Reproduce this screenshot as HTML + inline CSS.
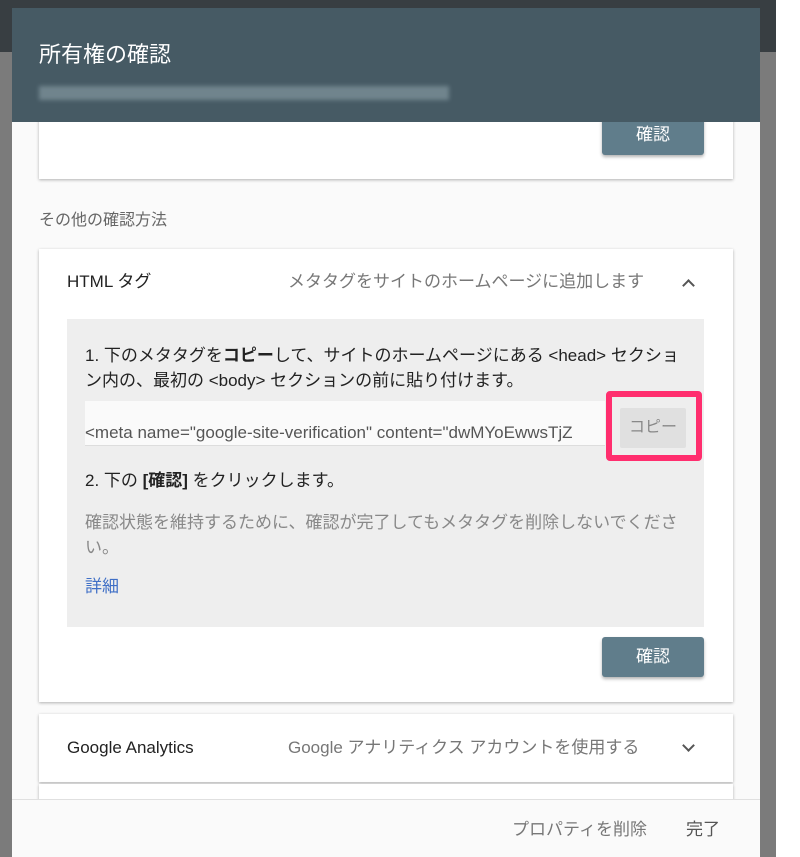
<!DOCTYPE html>
<html><head><meta charset="utf-8"><style>
*{box-sizing:border-box;margin:0;padding:0}
body{width:800px;height:857px;overflow:hidden;background:#7b7b7b;font-family:"Liberation Sans","Noto Sans CJK JP",sans-serif;position:relative}
.topbar{position:absolute;left:0;top:0;width:776px;height:52px;background:#383e42}
.rwhite{position:absolute;left:776px;top:0;width:24px;height:857px;background:#fff}
.dlg{position:absolute;left:12px;top:8px;width:748px;height:849px;background:#fafafa;overflow:hidden}
.hdr{position:absolute;left:0;top:0;width:748px;height:114px;background:#465a64;z-index:3}
.hdr h1{position:absolute;left:27px;top:29px;font-size:22px;font-weight:normal;color:#fff}
.blur{position:absolute;left:27px;top:78px;width:410px;height:14px;background:#7b8f98;opacity:.8;filter:blur(2px)}
.card{position:absolute;left:27px;width:694px;background:#fff;box-shadow:0 1px 3px rgba(0,0,0,.3)}
.btn{position:absolute;width:102px;height:40px;background:#607d8b;color:#fff;font-size:17px;text-align:center;line-height:40px;border-radius:3px;box-shadow:0 2px 3px rgba(0,0,0,.3)}
.lbl{position:absolute;left:27px;top:198px;font-size:16px;color:#666}
.row{position:absolute;font-size:17px;line-height:24px;white-space:nowrap}
.chev{position:absolute;width:9px;height:9px;border-left:2px solid #555;border-top:2px solid #555}
.gray{position:absolute;left:28px;top:70px;width:637px;height:308px;background:#eeeeee}
.t{position:absolute;left:18px;font-size:17px;color:#222;line-height:25px}
.foot{position:absolute;left:0;top:791px;width:748px;height:58px;background:#fafafa;border-top:1px solid #e0e0e0;z-index:3}
</style></head><body>
<div class="topbar"></div><div class="rwhite"></div>
<div class="dlg">
<div class="hdr"><h1>所有権の確認</h1><div class="blur"></div></div>
<div class="card" style="top:60px;height:111px"><div class="btn" style="left:563px;top:47px">確認</div></div>
<div class="lbl">その他の確認方法</div>
<div class="card" style="top:241px;height:453px">
 <div class="row" style="left:28px;top:21px;color:#222">HTML タグ</div>
 <div class="row" style="left:249px;top:21px;color:#777">メタタグをサイトのホームページに追加します</div>
 <div class="chev" style="left:645px;top:32px;transform:rotate(45deg)"></div>
 <div class="gray">
  <div class="t" style="top:24px;width:600px">1. 下のメタタグを<b>コピー</b>して、サイトのホームページにある &lt;head&gt; セクション内の、最初の &lt;body&gt; セクションの前に貼り付けます。</div>
  <div style="position:absolute;left:18px;top:82px;width:520px;height:45px;background:#fafafa;overflow:hidden;white-space:nowrap;font-size:17px;color:#555;padding-top:22px;border-bottom:1px solid #ddd">&lt;meta name="google-site-verification" content="dwMYoEwwsTjZ</div>
  <div style="position:absolute;left:539px;top:72px;width:96px;height:70px;border:6px solid #ff2e6e;border-radius:4px"></div>
  <div style="position:absolute;left:553px;top:89px;width:66px;height:40px;background:#e0e0e0;border-radius:2px;color:#888;font-size:16px;text-align:center;line-height:40px">コピー</div>
  <div class="t" style="top:149px">2. 下の <b>[確認]</b> をクリックします。</div>
  <div class="t" style="top:191px;width:612px;color:#888">確認状態を維持するために、確認が完了してもメタタグを削除しないでください。</div>
  <div class="t" style="top:255px;color:#3f6fc6">詳細</div>
 </div>
 <div class="btn" style="left:563px;top:388px">確認</div>
</div>
<div class="card" style="top:706px;height:68px">
 <div class="row" style="left:28px;top:22px;color:#222">Google Analytics</div>
 <div class="row" style="left:249px;top:22px;color:#777">Google アナリティクス アカウントを使用する</div>
 <div class="chev" style="left:645px;top:27px;transform:rotate(225deg)"></div>
</div>
<div class="card" style="top:776px;height:60px"></div>
<div class="foot">
 <div class="row" style="left:500px;top:18px;color:#777">プロパティを削除</div>
 <div class="row" style="left:674px;top:18px;color:#555">完了</div>
</div>
</div>
</body></html>
